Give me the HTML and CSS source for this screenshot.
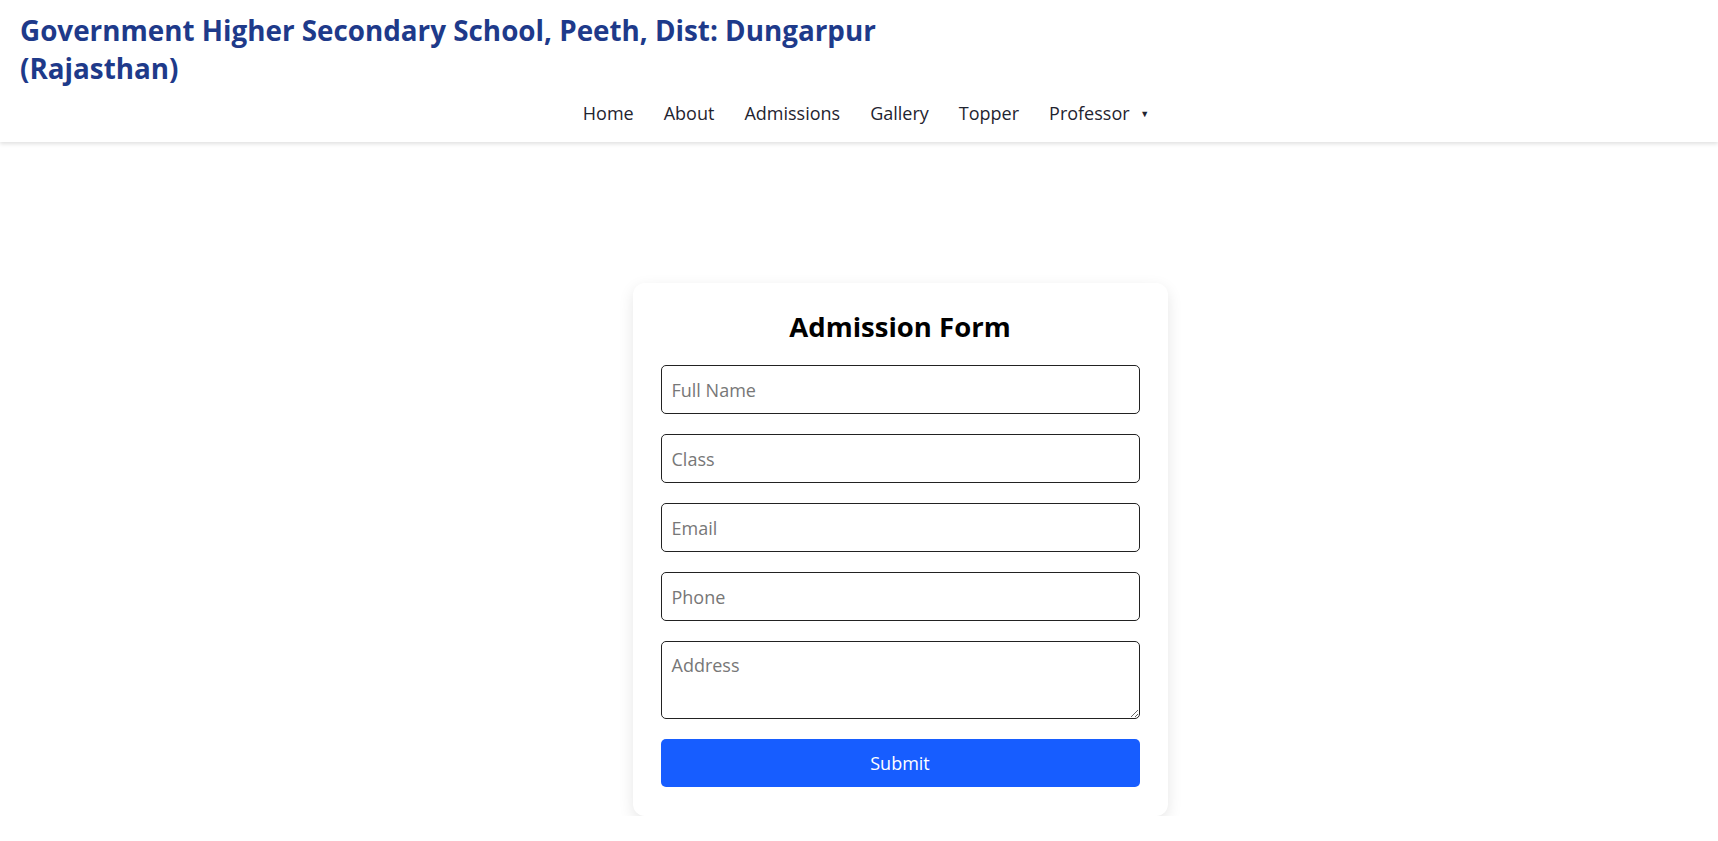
FILE: index.html
```html
<!DOCTYPE html>
<html lang="en">
<head>
<meta charset="utf-8">
<title>Admission Form</title>
<link rel="stylesheet" href="styles.css">
</head>
<body>
<header class="site-header">
  <h1 class="site-title">Government Higher Secondary School, Peeth, Dist: Dungarpur (Rajasthan)</h1>
  <nav class="nav">
    <a class="nav-link" href="#">Home</a>
    <a class="nav-link" href="#">About</a>
    <a class="nav-link" href="#">Admissions</a>
    <a class="nav-link" href="#">Gallery</a>
    <a class="nav-link" href="#">Topper</a>
    <a class="nav-link" href="#">Professor <span class="caret">▼</span></a>
  </nav>
</header>
<main class="main">
  <form class="card">
    <h2 class="card-title">Admission Form</h2>
    <input class="field" type="text" placeholder="Full Name">
    <input class="field" type="text" placeholder="Class">
    <input class="field" type="email" placeholder="Email">
    <input class="field" type="tel" placeholder="Phone">
    <textarea class="field area" placeholder="Address"></textarea>
    <button class="submit" type="button">Submit</button>
  </form>
</main>
</body>
</html>
```
FILE: styles.css
```css
* { box-sizing: border-box; }
html, body { margin: 0; padding: 0; background: #fff; }
body { font-family: "Open Sans", "Noto Sans", sans-serif; color: #111; }

.site-header {
  padding: 11px 20px 0;
  box-shadow: 0 2px 4px rgba(0,0,0,0.12);
  height: 142px;
}
.site-title {
  margin: 0;
  max-width: 900px;
  font-size: 27.8px;
  line-height: 38px;
  font-weight: 700;
  color: #1e3a8a;
}
.nav {
  display: flex;
  justify-content: center;
  padding-left: 14px;
  gap: 30px;
  margin-top: 12px;
}
.nav-link {
  color: #1f2430;
  text-decoration: none;
  font-size: 18px;
  line-height: 28px;
}
.caret { font-size: 9px; vertical-align: 3px; margin-left: 6px; }

.main {
  display: flex;
  justify-content: center;
  padding: 141px 0 0 82px;
}
.card {
  width: 535px;
  padding: 26px 28px 29px 28px;
  background: #fff;
  border-radius: 12px;
  box-shadow: 0 5px 15px rgba(0,0,0,0.10);
}
.card-title {
  margin: 0 0 20px;
  text-align: center;
  font-size: 27.5px;
  line-height: 36px;
  font-weight: 700;
  color: #000;
}
.field {
  display: block;
  width: 479px;
  height: 49px;
  margin: 0 0 20px;
  padding: 0 10px;
  border: 1px solid #222;
  border-radius: 5px;
  font-family: inherit;
  font-size: 18px;
  color: #111;
  background: #fff;
}
.field::placeholder { color: #777; }
.area { height: 78px; padding-top: 11px; resize: vertical; }
.submit {
  display: block;
  width: 479px;
  height: 48px;
  border: 0;
  border-radius: 5px;
  background: #175dff;
  color: #fff;
  font-family: inherit;
  font-size: 18px;
}
```
